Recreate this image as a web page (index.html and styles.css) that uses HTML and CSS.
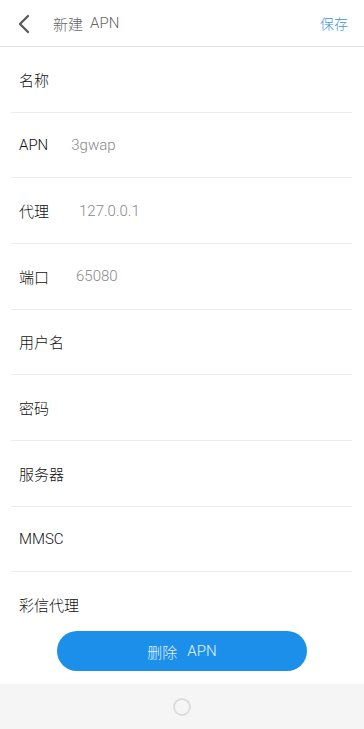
FILE: index.html
```html
<!DOCTYPE html>
<html lang="zh-CN">
<head>
<meta charset="utf-8">
<title>新建 APN</title>
<link rel="stylesheet" href="styles.css">
</head>
<body>
<div class="screen">
  <header class="topbar">
    <svg class="back" width="14" height="20" viewBox="0 0 14 20"><path d="M11 2 L3 10 L11 18" fill="none" stroke="#555" stroke-width="2.2" stroke-linecap="round" stroke-linejoin="round"/></svg>
    <span class="title">新建<span class="gap"></span>APN</span>
    <span class="save">保存</span>
  </header>
  <div class="list">
    <div class="row"><span class="label">名称</span></div>
    <div class="row"><span class="label">APN</span><span class="value v-apn">3gwap</span></div>
    <div class="row"><span class="label">代理</span><span class="value v-proxy">127.0.0.1</span></div>
    <div class="row"><span class="label">端口</span><span class="value v-port">65080</span></div>
    <div class="row"><span class="label">用户名</span></div>
    <div class="row"><span class="label">密码</span></div>
    <div class="row"><span class="label">服务器</span></div>
    <div class="row"><span class="label">MMSC</span></div>
    <div class="row faint"><span class="label">彩信代理</span></div>
  </div>
  <div class="actions">
    <button class="delete">删除<span class="gap2"></span>APN</button>
  </div>
  <nav class="navbar">
    <span class="home"></span>
  </nav>
</div>
</body>
</html>
```
FILE: styles.css
```css
* { box-sizing: border-box; }
html, body { margin: 0; padding: 0; background: #fff; }
body {
  font-family: Roboto, "Noto Sans CJK SC", sans-serif;
  width: 364px;
  height: 729px;
  overflow: hidden;
}
.screen {
  display: flex;
  flex-direction: column;
  height: 729px;
}
.topbar {
  height: 47px;
  flex: none;
  border-bottom: 1px solid #e2e2e2;
  display: flex;
  align-items: center;
  padding: 0 16px 0 16px;
}
.back { margin-top: 1px; margin-left: 1px; }
.title {
  margin-left: 22px;
  font-size: 15px;
  font-weight: 300;
  color: #666;
  display: flex;
  align-items: center;
}
.gap { display: inline-block; width: 7px; }
.gap2 { display: inline-block; width: 10px; }
.save {
  margin-left: auto;
  font-size: 14px;
  font-weight: 300;
  color: #3f95d8;
}
.list {
  flex: none;
  height: 573px;
  overflow: hidden;
}
.row {
  margin: 0 12px 0 11px;
  height: 65.67px;
  border-bottom: 1px solid #ececec;
  display: flex;
  align-items: center;
  padding-left: 8px;
  padding-top: 0;
}
.row.faint { border-bottom-color: #f6f6f6; }
.label {
  font-size: 15px;
  color: #111;
  font-weight: 300;
}
.value {
  font-size: 15px;
  font-weight: 300;
  color: #888;
}
.v-apn { margin-left: 23px; }
.v-proxy { margin-left: 30px; }
.v-port { margin-left: 27px; }
.actions {
  flex: none;
  height: 64px;
  display: flex;
  justify-content: center;
  padding-top: 11px;
  background: #fff;
}
.delete {
  width: 250px;
  height: 40px;
  border: none;
  border-radius: 20px;
  background: #1b8fe9;
  color: #e8f3fd;
  font-family: Roboto, "Noto Sans CJK SC", sans-serif;
  font-size: 15px;
  font-weight: 300;
  display: flex;
  align-items: center;
  justify-content: center;
}
.navbar {
  flex: 1;
  background: #f5f5f5;
  display: flex;
  align-items: center;
  justify-content: center;
}
.home {
  width: 18px;
  height: 18px;
  border: 2px solid #dcdcdc;
  border-radius: 50%;
}
```
